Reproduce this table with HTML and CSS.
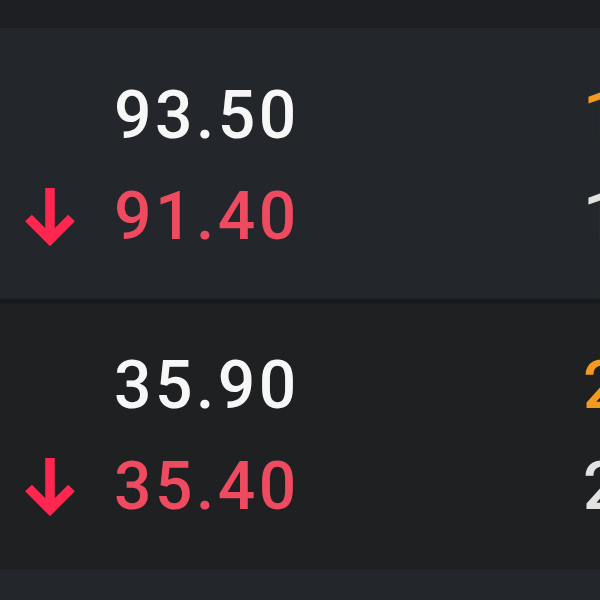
FILE: index.html
```html
<!DOCTYPE html>
<html lang="en">
<head>
<meta charset="utf-8">
<title>Quotes</title>
<link rel="stylesheet" href="styles.css">
</head>
<body>
<div class="screen">
  <div class="topbar"></div>
  <section class="row row-a">
    <div class="line">
      <span class="icon"></span>
      <span class="price">93.50</span>
      <span class="qty qty-bid">1,250</span>
    </div>
    <div class="line">
      <span class="icon">
        <svg class="arrow" viewBox="0 0 50 58" width="50" height="58" aria-hidden="true">
          <path d="M25 0 V50" fill="none" stroke="#ff2750" stroke-width="9.5"/>
          <path d="M3.5 30 L25 51.5 L46.5 30" fill="none" stroke="#ff2750" stroke-width="9.5"/>
        </svg>
      </span>
      <span class="price down">91.40</span>
      <span class="qty">1,100</span>
    </div>
  </section>
  <div class="separator"></div>
  <section class="row row-b">
    <div class="line">
      <span class="icon"></span>
      <span class="price">35.90</span>
      <span class="qty qty-bid">2,400</span>
    </div>
    <div class="line">
      <span class="icon">
        <svg class="arrow" viewBox="0 0 50 58" width="50" height="58" aria-hidden="true">
          <path d="M25 0 V50" fill="none" stroke="#ff2750" stroke-width="9.5"/>
          <path d="M3.5 30 L25 51.5 L46.5 30" fill="none" stroke="#ff2750" stroke-width="9.5"/>
        </svg>
      </span>
      <span class="price down">35.40</span>
      <span class="qty">2,050</span>
    </div>
  </section>
  <div class="bottombar"></div>
</div>
</body>
</html>
```
FILE: styles.css
```css
html, body {
  margin: 0;
  padding: 0;
  background: #23272b;
  overflow: hidden;
}

.screen {
  width: 600px;
  height: 600px;
  overflow: hidden;
  display: flex;
  flex-direction: column;
  font-family: Roboto, "Noto Sans", sans-serif;
}

.topbar {
  height: 28px;
  flex: none;
  background: #1d1f22;
  border-bottom: 1px solid #1a1c1f;
  box-sizing: border-box;
}

.row {
  flex: none;
  box-sizing: border-box;
}

.row-a {
  height: 270px;
  background: #23272b;
  padding-top: 37px;
}

.row-b {
  height: 264px;
  background: #1f2022;
  padding-top: 31px;
}

.separator {
  height: 6px;
  flex: none;
  background: linear-gradient(#1f2327, #14181b 50%, #1b1d20);
}

.bottombar {
  flex: 1;
  background: #23272b;
  border-top: 1px solid #1c1f22;
}

.line {
  display: grid;
  grid-template-columns: 114px 469px 200px;
  height: 101px;
  align-items: center;
  white-space: nowrap;
}

.icon {
  display: flex;
  align-items: center;
  padding-left: 25px;
}

.arrow {
  display: block;
}

.price {
  font-size: 66px;
  font-weight: 500;
  line-height: 101px;
  letter-spacing: 3.5px;
  color: #f7f7f7;
}

.price.down {
  color: #ee4a60;
}

.qty {
  font-size: 66px;
  font-weight: 500;
  line-height: 101px;
  letter-spacing: 3.5px;
  color: #e2e2e2;
}

.qty-bid {
  color: #f29a1f;
}
```
